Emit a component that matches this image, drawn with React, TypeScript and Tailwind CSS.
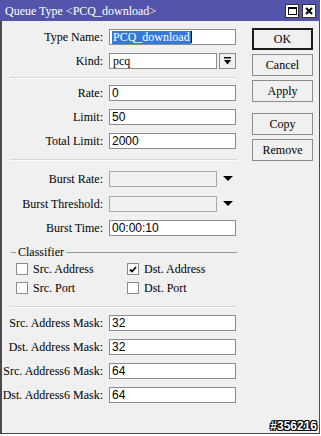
import React from "react";

const serif = "[font-family:'Liberation_Serif','Times_New_Roman',serif]";
const sans = "[font-family:'Liberation_Sans',Arial,sans-serif]";

function Field({ label, value, mt = "mt-[8px]", valueFont = sans }: { label: string; value: string; mt?: string; valueFont?: string }) {
    return (
        <div className={`flex items-center h-[16px] ${mt}`}>
            <div className="w-[104px] pr-[1px] text-right whitespace-nowrap">{label}</div>
            <div className={`ml-[5px] w-[127px] h-[16px] border border-[#8c8c8c] bg-white flex items-center pl-[2px] text-[12px] ${valueFont}`}>
                {value}
            </div>
        </div>
    );
}

function DisabledField({ label, mt }: { label: string; mt: string }) {
    return (
        <div className={`flex items-center h-[16px] ${mt}`}>
            <div className="w-[104px] pr-[1px] text-right whitespace-nowrap">{label}</div>
            <div className="ml-[5px] w-[108px] h-[16px] border border-[#a8a8a8] bg-[#f0f0f0]" />
            <svg width="10" height="6" viewBox="0 0 10 6" className="ml-[6px]">
                <polygon points="0,0 10,0 5,5" fill="#000" />
            </svg>
        </div>
    );
}

function Separator({ mt }: { mt: string }) {
    return <div className={`${mt} ml-[10px] w-[227px] h-[2px] border-t border-[#d4d4d4] border-b border-b-white`} />;
}

function Check({ label, checked }: { label: string; checked?: boolean }) {
    return (
        <div className="flex items-center w-[111px]">
            <div className="w-[12px] h-[12px] border border-[#8c8c8c] bg-white flex items-center justify-center">
                {checked && (
                    <svg width="8" height="7" viewBox="0 0 8 7">
                        <path d="M1 3.5 L3 5.5 L7 1" stroke="#000" strokeWidth="1.8" fill="none" />
                    </svg>
                )}
            </div>
            <span className="ml-[5px]">{label}</span>
        </div>
    );
}

function Btn({ label, mt, primary }: { label: string; mt: string; primary?: boolean }) {
    return (
        <div
            className={`${mt} w-[61px] h-[22px] flex items-center justify-center bg-[#f0f0f0] ${
                primary ? "border-2 border-[#1a1a1a]" : "border border-[#8c8c8c]"
            }`}
        >
            {label}
        </div>
    );
}

export default function App() {
    return (
        <div className={`relative w-[321px] h-[436px] bg-white text-[12px] text-black ${serif}`}>
            <div className="w-[320px] h-[434px] bg-[#f0f0f0] border-x border-b border-[#4a4a4a] border-l-2 flex flex-col">
                {/* title bar */}
                <div className="h-[21px] -ml-[2px] -mr-[1px] bg-[#5454aa] flex items-center pl-[5px] pr-[4px]">
                    <span className="text-white text-[12px] flex-1">Queue Type &lt;PCQ_download&gt;</span>
                    <div className="w-[14px] h-[14px] bg-white border border-[#333] flex items-center justify-center">
                        <div className="w-[9px] h-[8px] border border-black border-t-2" />
                    </div>
                    <div className="ml-[3px] w-[14px] h-[14px] bg-white border border-[#333] flex items-center justify-center">
                        <svg width="8" height="8" viewBox="0 0 8 8">
                            <path d="M1 1 L7 7 M7 1 L1 7" stroke="#000" strokeWidth="2" />
                        </svg>
                    </div>
                </div>

                <div className="flex">
                    {/* form */}
                    <div className="w-[248px] flex flex-col -ml-[2px]">
                        <div className="flex items-center h-[16px] mt-[8px]">
                            <div className="w-[104px] pr-[1px] text-right">Type Name:</div>
                            <div className="ml-[5px] w-[127px] h-[16px] border border-[#8c8c8c] bg-white flex items-center pl-[2px]">
                                <span className="bg-[#3679d8] text-white leading-[13px] px-[1px]">PCQ_download</span>
                                <span className="w-[1px] h-[12px] bg-black" />
                            </div>
                        </div>
                        <div className="flex items-center h-[16px] mt-[8px]">
                            <div className="w-[104px] pr-[1px] text-right">Kind:</div>
                            <div className="ml-[5px] w-[108px] h-[16px] border border-[#8c8c8c] bg-white flex items-center pl-[3px]">
                                pcq
                            </div>
                            <div className="ml-[2px] w-[17px] h-[16px] border border-[#8c8c8c] bg-[#f0f0f0] flex items-center justify-center">
                                <svg width="7" height="8" viewBox="0 0 7 8">
                                    <rect x="0" y="0" width="7" height="1.5" fill="#000" />
                                    <polygon points="0,3 7,3 3.5,7.5" fill="#000" />
                                </svg>
                            </div>
                        </div>

                        <Separator mt="mt-[8px]" />

                        <Field label="Rate:" value="0" mt="mt-[6px]" />
                        <Field label="Limit:" value="50" />
                        <Field label="Total Limit:" value="2000" />

                        <Separator mt="mt-[10px]" />

                        <DisabledField label="Burst Rate:" mt="mt-[10px]" />
                        <DisabledField label="Burst Threshold:" mt="mt-[9px]" />
                        <Field label="Burst Time:" value="00:00:10" />

                        {/* classifier group */}
                        <div className="mt-[9px] h-[14px] flex items-center ml-[11px] w-[226px]">
                            <div className="w-[5px] h-[1px] bg-[#9a9a9a]" />
                            <span className="px-[2px]">Classifier</span>
                            <div className="flex-1 h-[1px] bg-[#9a9a9a]" />
                        </div>
                        <div className="mt-[3px] h-[14px] flex items-center ml-[16px]">
                            <Check label="Src. Address" />
                            <Check label="Dst. Address" checked />
                        </div>
                        <div className="mt-[5px] h-[14px] flex items-center ml-[16px]">
                            <Check label="Src. Port" />
                            <Check label="Dst. Port" />
                        </div>

                        <Separator mt="mt-[11px]" />

                        <Field label="Src. Address Mask:" value="32" mt="mt-[7px]" />
                        <Field label="Dst. Address Mask:" value="32" />
                        <Field label="Src. Address6 Mask:" value="64" />
                        <Field label="Dst. Address6 Mask:" value="64" />
                    </div>

                    {/* buttons */}
                    <div className="flex flex-col ml-[4px]">
                        <Btn label="OK" mt="mt-[7px]" primary />
                        <Btn label="Cancel" mt="mt-[4px]" />
                        <Btn label="Apply" mt="mt-[4px]" />
                        <Btn label="Copy" mt="mt-[11px]" />
                        <Btn label="Remove" mt="mt-[4px]" />
                    </div>
                </div>
            </div>

            <div
                className={`absolute right-[4px] bottom-[4px] text-[12px] font-bold text-white leading-none ${sans} [text-shadow:1px_0_0_#000,-1px_0_0_#000,0_1px_0_#000,0_-1px_0_#000,1px_1px_0_#000,-1px_-1px_0_#000,1px_-1px_0_#000,-1px_1px_0_#000]`}
            >
                #356216
            </div>
        </div>
    );
}
